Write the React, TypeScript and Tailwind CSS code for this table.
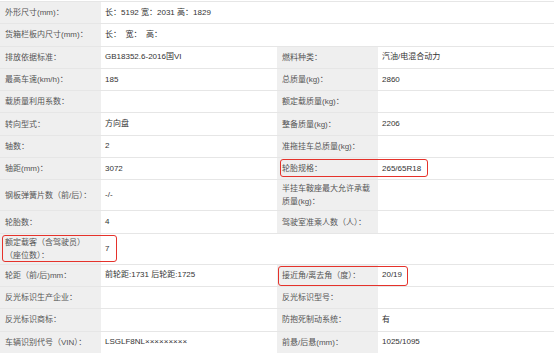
import React from "react";

type Cell = { label: string; value?: string };
type Row = {
  cells: Cell[]; // 1 cell = full width value, 2 cells = two pairs
  tall?: boolean;
  mark?: { left: number; width: number; top: number; bottom: number };
};

const ROWS: Row[] = [
  { cells: [{ label: "外形尺寸(mm)：", value: "长：5192 宽：2031 高：1829" }] },
  { cells: [{ label: "货箱栏板内尺寸(mm)：", value: "长：  宽：  高：" }] },
  {
    cells: [
      { label: "排放依据标准：", value: "GB18352.6-2016国VI" },
      { label: "燃料种类：", value: "汽油/电混合动力" },
    ],
  },
  {
    cells: [
      { label: "最高车速(km/h)：", value: "185" },
      { label: "总质量(kg)：", value: "2860" },
    ],
  },
  {
    cells: [
      { label: "载质量利用系数：", value: "" },
      { label: "额定载质量(kg)：", value: "" },
    ],
  },
  {
    cells: [
      { label: "转向型式：", value: "方向盘" },
      { label: "整备质量(kg)：", value: "2206" },
    ],
  },
  {
    cells: [
      { label: "轴数：", value: "2" },
      { label: "准拖挂车总质量(kg)：", value: "" },
    ],
  },
  {
    cells: [
      { label: "轴距(mm)：", value: "3072" },
      { label: "轮胎规格：", value: "265/65R18" },
    ],
    mark: { left: 280, width: 148, top: 1, bottom: 2 },
  },
  {
    tall: true,
    cells: [
      { label: "钢板弹簧片数（前/后）：", value: "-/-" },
      { label: "半挂车鞍座最大允许承载\n质量(kg)：", value: "" },
    ],
  },
  {
    cells: [
      { label: "轮胎数：", value: "4" },
      { label: "驾驶室准乘人数（人）：", value: "" },
    ],
  },
  {
    tall: true,
    cells: [{ label: "额定载客（含驾驶员）\n（座位数）：", value: "7" }, { label: "" }],
    mark: { left: 2, width: 115, top: 1, bottom: 2 },
  },
  {
    cells: [
      { label: "轮距（前/后)mm：", value: "前轮距:1731 后轮距:1725" },
      { label: "接近角/离去角（度）：", value: "20/19" },
    ],
    mark: { left: 278, width: 130, top: 1, bottom: 0 },
  },
  {
    cells: [
      { label: "反光标识生产企业：", value: "" },
      { label: "反光标识型号：", value: "" },
    ],
  },
  {
    cells: [
      { label: "反光标识商标：", value: "" },
      { label: "防抱死制动系统：", value: "有" },
    ],
  },
  {
    cells: [
      { label: "车辆识别代号（VIN）：", value: "LSGLF8NL×××××××××" },
      { label: "前悬/后悬(mm)：", value: "1025/1095" },
    ],
  },
];

const Label = ({ text }: { text: string }) => (
  <div
    className={`flex items-center pl-[5px] pr-[4px] leading-[13px] whitespace-pre-line text-[#555] ${
      text ? "bg-[#efefef]" : "bg-white"
    }`}
  >
    {text}
  </div>
);

const Value = ({ text, span }: { text?: string; span?: boolean }) => (
  <div
    className={`flex items-center pl-[4px] whitespace-pre text-[#333] bg-white ${
      span ? "col-span-3" : ""
    }`}
  >
    {text}
  </div>
);

export default function App() {
  return (
    <div
      className="w-[554px] h-[353px] overflow-hidden bg-white pt-px text-[8px]"
      style={{ fontFamily: '"Liberation Sans", Arial, "Noto Sans CJK SC", sans-serif' }}
    >
      <div className="border-t border-[#e6e6e6]">
        {ROWS.map((row, i) => (
          <div
            key={i}
            className={`relative grid grid-cols-[101px_176px_101px_176px] border-b border-[#e6e6e6] ${
              row.tall ? "h-[31px]" : "h-[22.3px]"
            }`}
          >
            {row.cells.length === 1 ? (
              <>
                <Label text={row.cells[0].label} />
                <Value text={row.cells[0].value} span />
              </>
            ) : (
              row.cells.map((c, j) => (
                <React.Fragment key={j}>
                  <Label text={c.label} />
                  <Value text={c.value} />
                </React.Fragment>
              ))
            )}
            {row.mark && (
              <div
                className="absolute rounded-[3px] border-[1.5px] border-[#e5322b]"
                style={{
                  left: row.mark.left,
                  width: row.mark.width,
                  top: row.mark.top,
                  bottom: row.mark.bottom,
                }}
              />
            )}
          </div>
        ))}
      </div>
    </div>
  );
}
